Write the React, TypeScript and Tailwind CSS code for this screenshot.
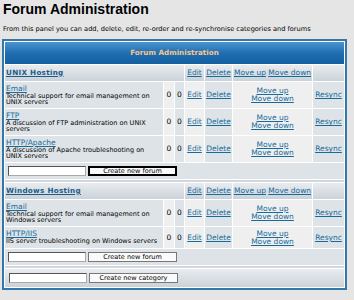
const link = "text-[#176b9b] underline";

type Forum = { name: string; desc: string; h: string };

const categories: { title: string; forums: Forum[]; boldButton?: boolean }[] = [
  {
    title: "UNIX Hosting",
    boldButton: true,
    forums: [
      { name: "Email", desc: "Technical support for email management on UNIX servers", h: "h-[26px]" },
      { name: "FTP", desc: "A discussion of FTP administration on UNIX servers", h: "h-[26px]" },
      { name: "HTTP/Apache", desc: "A discussion of Apache troubleshooting on UNIX servers", h: "h-[26px]" },
    ],
  },
  {
    title: "Windows Hosting",
    forums: [
      { name: "Email", desc: "Technical support for email management on Windows servers", h: "h-[26px]" },
      { name: "HTTP/IIS", desc: "IIS server troubleshooting on Windows servers", h: "h-[21px]" },
    ],
  },
];

const row1 = "bg-[#efefef]";
const row2 = "bg-[#dee3e7]";
const catBg = "bg-gradient-to-b from-[#e9ecef] to-[#cad2d9]";
const center = "flex flex-col items-center justify-center text-center";

function AddRow({ label, bold, className }: { label: string; bold?: boolean; className: string }) {
  return (
    <div className={`col-span-7 flex items-center gap-[2px] pl-[3px] ${className}`}>
      <input
        type="text"
        className="w-[78px] h-[10px] bg-white border border-[#555] border-r-[#aaa] border-b-[#aaa]"
      />
      <button
        className={`h-[10px] bg-[#fafafa] text-[6.5px] leading-none text-black flex items-center justify-center ${
          bold ? "w-[89px] border-2 border-black" : "w-[89px] border border-[#777]"
        }`}
      >
        {label}
      </button>
    </div>
  );
}

function ForumRow({ name, desc, h }: Forum) {
  return (
    <>
      <div className={`${row2} ${h} px-[1px] flex flex-col justify-center`}>
        <a className={`${link} text-[7.5px] leading-[8px]`}>{name}</a>
        <span className="text-[6.5px] leading-[6.5px] text-black">{desc}</span>
      </div>
      <div className={`${row1} ${center} text-[7.5px]`}>0</div>
      <div className={`${row2} ${center} text-[7.5px]`}>0</div>
      <div className={`${row1} ${center}`}>
        <a className={`${link} text-[7.5px]`}>Edit</a>
      </div>
      <div className={`${row2} ${center}`}>
        <a className={`${link} text-[7.5px]`}>Delete</a>
      </div>
      <div className={`${row1} ${center} text-[7.5px] leading-[8px]`}>
        <a className={link}>Move up</a>
        <a className={link}>Move down</a>
      </div>
      <div className={`${row2} ${center}`}>
        <a className={`${link} text-[7.5px]`}>Resync</a>
      </div>
    </>
  );
}

export default function App() {
  return (
    <div className="w-[354px] h-[300px] overflow-hidden bg-[#e5e5e5] font-['DejaVu_Sans',sans-serif] text-black">
      <h1 className="mt-[2px] pl-[3px] text-[14px] leading-[15px] font-bold font-['Liberation_Sans',Arial,sans-serif]">
        Forum Administration
      </h1>
      <p className="mt-[9px] pl-[3px] text-[6.6px] leading-[7px]">
        From this panel you can add, delete, edit, re-order and re-synchronise categories and forums
      </p>

      <div className="mt-[6px] ml-[2px] w-[345px] border-2 border-[#3378aa] bg-white p-px grid grid-cols-[158px_10px_9px_19px_27px_79px_31px] gap-px">
        {/* Header */}
        <div className="col-span-7 h-[22px] flex items-center justify-center bg-gradient-to-b from-[#4a93cf] via-[#1f6fb3] to-[#145f9f] text-[7.2px] font-bold text-[#f5c68e]">
          Forum Administration
        </div>

        {categories.map((cat) => (
          <div key={cat.title} className="contents">
            <div className={`col-span-3 h-[16px] ${catBg} flex items-center px-[1px]`}>
              <a className="text-[#1b5d8a] underline font-bold text-[7.2px] tracking-[0.3px]">{cat.title}</a>
            </div>
            <div className={`${catBg} ${center}`}>
              <a className={`${link} text-[7.5px]`}>Edit</a>
            </div>
            <div className={`${catBg} ${center}`}>
              <a className={`${link} text-[7.5px]`}>Delete</a>
            </div>
            <div className={`${catBg} ${center} text-[7.5px] whitespace-nowrap`}>
              <span>
                <a className={link}>Move up</a> <a className={link}>Move down</a>
              </span>
            </div>
            <div className={catBg}></div>

            {cat.forums.map((f) => (
              <ForumRow key={f.name + f.desc} {...f} />
            ))}

            <AddRow label="Create new forum" bold={cat.boldButton} className={`h-[16px] ${row2}`} />
            <div className="col-span-7 h-[2px] bg-[#d1d7dc]"></div>
          </div>
        ))}

        <AddRow label="Create new category" className={`h-[18px] ${catBg} pl-[4px]`} />
      </div>
    </div>
  );
}
